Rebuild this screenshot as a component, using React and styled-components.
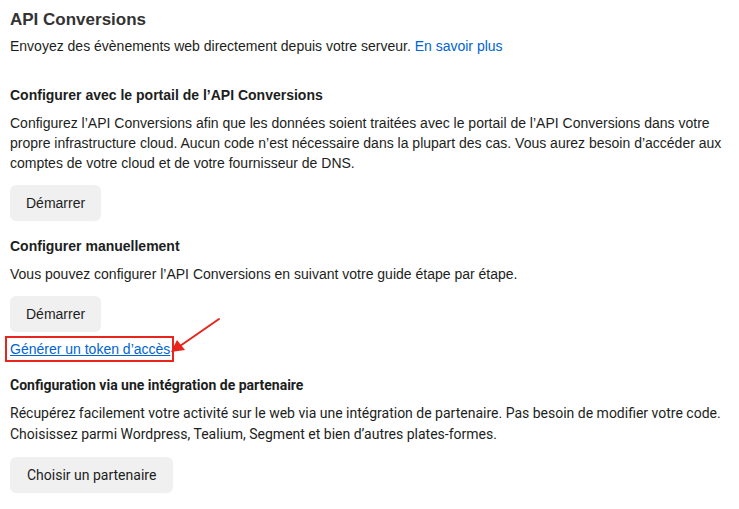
import React from "react";
import styled, { createGlobalStyle } from "styled-components";

const Global = createGlobalStyle`
  body {
    margin: 0;
    background: #fff;
    font-family: "Liberation Sans", Arial, sans-serif;
    color: #1c1e21;
  }
`;

const Page = styled.div`
  position: relative;
  width: 739px;
  height: 509px;
  padding: 9px 10px 0 10px;
  box-sizing: border-box;
`;

const Title = styled.h1`
  margin: 0;
  font-size: 17px;
  font-weight: 700;
  line-height: 22px;
  color: #333;
`;

const Lead = styled.p`
  margin: 5px 0 0;
  font-size: 14px;
  line-height: 20px;
`;

const Link = styled.a`
  color: #0064d1;
  text-decoration: ${(p) => (p.$underline ? "underline" : "none")};
  cursor: pointer;
`;

const Section = styled.section`
  margin-top: ${(p) => p.$top || 0}px;
  display: flex;
  flex-direction: column;
  align-items: flex-start;
  font-family: ${(p) => (p.$narrow ? '"Roboto", sans-serif' : "inherit")};
`;

const Heading = styled.h2`
  margin: 0;
  font-size: 14px;
  font-weight: 700;
  line-height: 20px;
`;

const Text = styled.p`
  margin: 8px 0 0;
  font-size: 14px;
  line-height: ${(p) => p.$lh || 20}px;
`;

const Button = styled.button`
  margin-top: 12px;
  height: 36px;
  padding: 0 ${(p) => p.$pad || 16}px;
  border: none;
  border-radius: 6px;
  background: #f0f0f0;
  font: inherit;
  font-size: 14px;
  color: #1c1e21;
`;

const TokenBox = styled.div`
  margin-top: 4px;
  margin-left: -5px;
  padding: 1px 2px 1px 3px;
  border: 2px solid #e8251c;
  font-size: 14px;
  line-height: 20px;
`;

const Arrow = styled.svg`
  position: absolute;
  left: 166px;
  top: 316px;
  pointer-events: none;
`;

export default function App() {
  return (
    <>
      <Global />
      <Page>
        <Title>API Conversions</Title>
        <Lead>
          Envoyez des évènements web directement depuis votre serveur.{" "}
          <Link>En savoir plus</Link>
        </Lead>

        <Section $top={29}>
          <Heading>Configurer avec le portail de l’API Conversions</Heading>
          <Text>
            Configurez l’API Conversions afin que les données soient traitées avec le portail de l’API Conversions dans votre
            propre infrastructure cloud. Aucun code n’est nécessaire dans la plupart des cas. Vous aurez besoin d’accéder aux
            comptes de votre cloud et de votre fournisseur de DNS.
          </Text>
          <Button>Démarrer</Button>
        </Section>

        <Section $top={15}>
          <Heading>Configurer manuellement</Heading>
          <Text>Vous pouvez configurer l’API Conversions en suivant votre guide étape par étape.</Text>
          <Button>Démarrer</Button>
          <TokenBox>
            <Link $underline>Générer un token d’accès</Link>
          </TokenBox>
        </Section>

        <Section $top={13} $narrow>
          <Heading>Configuration via une intégration de partenaire</Heading>
          <Text $lh={21}>
            Récupérez facilement votre activité sur le web via une intégration de partenaire. Pas besoin de modifier votre code.
            <br />
            Choisissez parmi Wordpress, Tealium, Segment et bien d’autres plates-formes.
          </Text>
          <Button $pad={17}>Choisir un partenaire</Button>
        </Section>

        <Arrow width="58" height="40" viewBox="0 0 58 40">
          <line x1="53" y1="3" x2="14" y2="30" stroke="#e8251c" strokeWidth="2" strokeLinecap="round" />
          <polygon points="5,36 11,24 19,34" fill="#e8251c" />
        </Arrow>
      </Page>
    </>
  );
}
